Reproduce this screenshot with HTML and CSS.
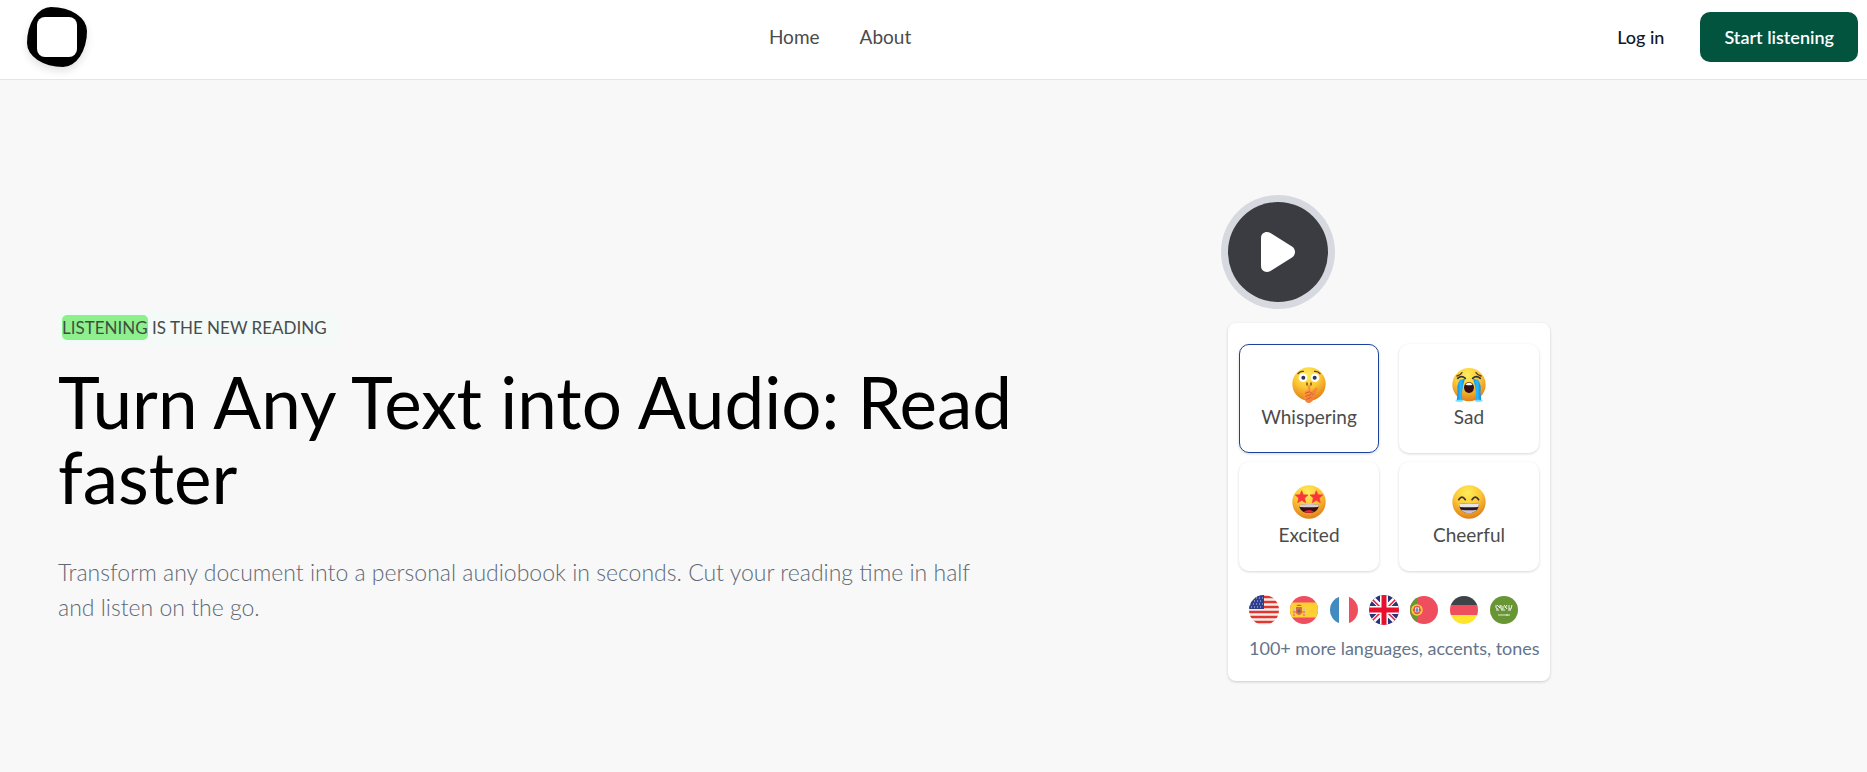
FILE: index.html
```html
<!DOCTYPE html>
<html lang="en">
<head>
    <meta charset="UTF-8">
    <meta name="viewport" content="width=device-width, initial-scale=1">
    <title>Turn Any Text into Audio</title>
    <link rel="stylesheet" href="styles.css">
</head>
<body>
    <header class="header">
        <a class="logo" href="#" aria-label="Home page"><span class="logo-hole"></span></a>
        <nav class="nav">
            <a href="#">Home</a>
            <a href="#about">About</a>
        </nav>
        <div class="actions">
            <a class="login" href="#login">Log in</a>
            <button class="btn-start" type="button">Start listening</button>
        </div>
    </header>

    <main class="hero">
        <section class="intro">
            <p class="tag"><mark>LISTENING</mark> IS THE NEW READING</p>
            <h1>Turn Any Text into Audio: Read faster</h1>
            <p class="lead">Transform any document into a personal audiobook in seconds. Cut your reading time in half and listen on the go.</p>
        </section>

        <section class="demo">
            <button class="play" type="button" aria-label="Play">
                <svg viewBox="0 0 34 40" width="34" height="40">
                    <path d="M0 6C0 1 5 -1.500 9.500 1L31 14.500C35 17 35 23 31 25.500L9.500 39C5 41.500 0 39 0 34Z" fill="#fff"/>
                </svg>
            </button>

            <div class="panel">
                <div class="tones">
                    <button class="tone active" type="button">
                        <svg viewBox="0 0 102 108" width="34" height="36">
                            <defs>
                                <radialGradient id="face" cx="45%" cy="22%" r="80%">
                                    <stop offset="0" stop-color="#ffee58"/>
                                    <stop offset=".5" stop-color="#fcc735"/>
                                    <stop offset="1" stop-color="#e07a16"/>
                                </radialGradient>
                                <linearGradient id="hand" x1="0" y1="0" x2="1" y2="1">
                                    <stop offset="0" stop-color="#ffa53e"/>
                                    <stop offset="1" stop-color="#f0703c"/>
                                </linearGradient>
                                <linearGradient id="tear" x1="0" y1="0" x2="1" y2="0">
                                    <stop offset="0" stop-color="#0a8fe0"/>
                                    <stop offset=".5" stop-color="#2cb8ff"/>
                                    <stop offset="1" stop-color="#0787dd"/>
                                </linearGradient>
                            </defs>
                            <circle cx="51" cy="51" r="50" fill="url(#face)"/>
                            <path d="M18 20Q24 12 34 13M68 13Q78 12 84 20" fill="none" stroke="#5d3a20" stroke-width="4" stroke-linecap="round"/>
                            <circle cx="33" cy="32" r="13" fill="#fff"/>
                            <circle cx="69" cy="32" r="13" fill="#fff"/>
                            <circle cx="34" cy="32" r="6" fill="#303650"/>
                            <circle cx="68" cy="32" r="6" fill="#303650"/>
                            <path d="M45 48V54M57 48V54" stroke="#66391a" stroke-width="4" stroke-linecap="round"/>
                            <path d="M47 56Q51 51 55 56L56 76L71 62Q77 60 76 67L66 91Q62 107 51 108Q40 108 38 97L34 88Q32 82 38 79Q36 72 47 70Z" fill="url(#hand)"/>
                            <path d="M40 79L53 74M41 88L56 83M44 97L57 91M56 76L63 83" fill="none" stroke="#d85c28" stroke-width="3" stroke-linecap="round"/>
                        </svg>
                        <span>Whispering</span>
                    </button>
                    <button class="tone" type="button">
                        <svg viewBox="0 0 102 108" width="34" height="36">
                            <circle cx="51" cy="53" r="50" fill="url(#face)"/>
                            <path d="M15 27Q25 25 30 17M72 17Q77 25 87 27" fill="none" stroke="#5d3a20" stroke-width="4" stroke-linecap="round"/>
                            <path d="M20 36Q31 40 39 34L33 57Q28 76 31 101L14 101Q18 76 16 58Q18 45 25 37Z" fill="url(#tear)"/>
                            <path d="M82 36Q71 40 63 34L69 57Q74 76 71 101L88 101Q84 76 86 58Q84 45 77 37Z" fill="url(#tear)"/>
                            <path d="M17 34Q29 24 40 34M62 34Q73 24 85 34" fill="none" stroke="#293147" stroke-width="5" stroke-linecap="round"/>
                            <ellipse cx="22" cy="101" rx="12" ry="3" fill="#78dcff"/>
                            <ellipse cx="80" cy="101" rx="12" ry="3" fill="#78dcff"/>
                            <path d="M36 61Q38 46 51 46T66 61Q65 78 51 78T36 61Z" fill="#350d15"/>
                            <path d="M40 53Q43 47 51 47T62 53Q51 57 40 53Z" fill="#fff"/>
                        </svg>
                        <span>Sad</span>
                    </button>
                    <button class="tone" type="button">
                        <svg viewBox="0 0 102 108" width="34" height="36">
                            <circle cx="51" cy="51" r="50" fill="url(#face)"/>
                            <path id="star" d="M29 17L34 29L48 30L38 39L41 53L29 46L17 53L20 39L10 30L24 29Z" fill="#f9363b" stroke="#f9363b" stroke-width="2" stroke-linejoin="round"/>
                            <use href="#star" x="44"/>
                            <path d="M21 60Q51 56 81 60Q78 84 51 84T21 60Z" fill="#350d15"/>
                            <path d="M21 59Q51 55 81 59L79 66Q51 68 23 66Z" fill="#d9cdd2"/>
                            <path d="M36 80Q51 70 66 80Q51 87 36 80Z" fill="#ec2534"/>
                        </svg>
                        <span>Excited</span>
                    </button>
                    <button class="tone" type="button">
                        <svg viewBox="0 0 102 108" width="34" height="36">
                            <circle cx="51" cy="51" r="50" fill="url(#face)"/>
                            <path d="M20 44Q30 29 40 44M60 44Q70 29 80 44" fill="none" stroke="#3d3032" stroke-width="5" stroke-linecap="round"/>
                            <path d="M21 57Q51 53 81 57Q80 84 51 84T21 57Z" fill="#24191f"/>
                            <path d="M21 57Q51 52 81 57L79 66Q51 68 23 66Z" fill="#e9e2e7"/>
                            <path d="M27 74Q51 78 75 74Q67 84 51 84T27 74Z" fill="#cbc1d2"/>
                        </svg>
                        <span>Cheerful</span>
                    </button>
                </div>

                <div class="languages">
                    <div class="flags">
                        <!-- USA -->
                        <svg viewBox="0 0 30 30" role="img" aria-label="American English">
                            <defs>
                                <clipPath id="big"><circle cx="15" cy="15" r="15"/></clipPath>
                                <clipPath id="small"><circle cx="15" cy="15" r="14"/></clipPath>
                            </defs>
                            <g clip-path="url(#big)">
                                <path d="M0 0H30V30H0Z" fill="#f4f0ee"/>
                                <path d="M0 2H30M0 7H30M0 12H30M0 17H30M0 22H30M0 27H30" stroke="#e2372c" stroke-width="2.500"/>
                                <path d="M0 0H15V14H0Z" fill="#2e3f8f"/>
                                <path d="M1 3H14M2 6H14M1 9H14M2 12H14" stroke="#c9cde6" stroke-width="1" stroke-dasharray="1 2"/>
                            </g>
                        </svg>
                        <!-- Spain -->
                        <svg viewBox="0 0 30 30" role="img" aria-label="Spanish">
                            <g clip-path="url(#small)">
                                <path d="M0 0H30V30H0Z" fill="#ef4e5e"/>
                                <path d="M0 7.500H30V22.500H0Z" fill="#ffd033"/>
                                <path d="M7 12H13V18Q10 22 7 18Z" fill="#d66b43"/>
                                <path d="M5 13V20M15 13V20" stroke="#d9c1a0" stroke-width="1.500"/>
                                <path d="M4 17H7M13 17H16M4 20H6M14 20H16" stroke="#ea5a55" stroke-width="1.200"/>
                                <path d="M7 11Q10 8 13 11Z" fill="#e84c55"/>
                                <circle cx="10" cy="16" r="1.500" fill="#6a6277"/>
                            </g>
                        </svg>
                        <!-- France -->
                        <svg viewBox="0 0 30 30" role="img" aria-label="French">
                            <g clip-path="url(#small)">
                                <path d="M0 0H30V30H0Z" fill="#fff"/>
                                <path d="M0 0H10V30H0Z" fill="#428bc1"/>
                                <path d="M20 0H30V30H20Z" fill="#ef4e5e"/>
                            </g>
                        </svg>
                        <!-- United Kingdom -->
                        <svg viewBox="0 0 30 30" role="img" aria-label="British English">
                            <g clip-path="url(#big)">
                                <path d="M0 0H30V30H0Z" fill="#29337a"/>
                                <path d="M0 0L30 30M30 0L0 30" stroke="#fff" stroke-width="5"/>
                                <path d="M0 1L14 15M30 1L16 15M0 29L14 15M30 29L16 15" stroke="#e4183a" stroke-width="1.500"/>
                                <path d="M15 0V30M0 15H30" stroke="#fff" stroke-width="8"/>
                                <path d="M15 0V30M0 15H30" stroke="#e8112d" stroke-width="5"/>
                            </g>
                        </svg>
                        <!-- Portugal -->
                        <svg viewBox="0 0 30 30" role="img" aria-label="Portuguese">
                            <g clip-path="url(#small)">
                                <path d="M0 0H30V30H0Z" fill="#ef4e5e"/>
                                <path d="M0 0H8V30H0Z" fill="#699635"/>
                                <circle cx="8" cy="15" r="5" fill="#d86041" stroke="#f9d038" stroke-width="1.500"/>
                                <path d="M3 12L13 18M3 18L13 12" stroke="#f9d038" stroke-width="1"/>
                                <path d="M5.500 12H10.500V16Q8 20 5.500 16Z" fill="#f4eef0" stroke="#ea4d5a" stroke-width="1"/>
                                <path d="M8 13V17M6.500 15H9.500" stroke="#3972b5" stroke-width="1.200"/>
                            </g>
                        </svg>
                        <!-- Germany -->
                        <svg viewBox="0 0 30 30" role="img" aria-label="German">
                            <g clip-path="url(#small)">
                                <path d="M0 0H30V10H0Z" fill="#3e4347"/>
                                <path d="M0 10H30V20H0Z" fill="#ef4e5e"/>
                                <path d="M0 20H30V30H0Z" fill="#ffe62e"/>
                            </g>
                        </svg>
                        <!-- Saudi Arabia -->
                        <svg viewBox="0 0 30 30" role="img" aria-label="Arabic">
                            <circle cx="15" cy="15" r="14" fill="#699635"/>
                            <path d="M7 10V13L9 14M8 10L11 13V10M12 10V14H14V11M15 10L18 14M18 10L16 13M20 10V14H22L23 10M7 15H10M12 15H16M19 15H22" fill="none" stroke="#f0f5e9" stroke-width="1"/>
                            <path d="M9 20H21M18 19V21" stroke="#dbe7ca" stroke-width="1.200"/>
                        </svg>
                    </div>
                    <p>100+ more languages, accents, tones</p>
                </div>
            </div>
        </section>
    </main>
</body>
</html>
```
FILE: styles.css
```css
* {
    box-sizing: border-box;
}

body {
    margin: 0;
    min-height: 100vh;
    display: flex;
    flex-direction: column;
    background: #f8f8f8;
    color: #4b4b4b;
    font-family: Lato, sans-serif;
    font-size: 18px;
    line-height: 24px;
}

h1, p {
    margin: 0;
}

a {
    color: inherit;
    text-decoration: none;
}

button {
    border: 0;
    color: inherit;
    font: inherit;
    cursor: pointer;
}

/* header */
.header {
    display: flex;
    align-items: center;
    justify-content: space-between;
    height: 80px;
    padding: 0 9px 6px 27px;
    background: #fff;
    border-bottom: 1px solid #e5e5e5;
}

.logo {
    display: flex;
    align-items: center;
    justify-content: center;
    width: 60px;
    height: 60px;
    background: #000;
    border-radius: 40% 60% 40% 60% / 60% 40% 60% 40%;
    box-shadow: 0 4px 8px rgba(0, 0, 0, .12);
}

.logo-hole {
    width: 40px;
    height: 40px;
    background: #fff;
    border-radius: 8px;
}

.nav {
    display: flex;
    gap: 40px;
    padding-right: 24px;
    font-size: 19px;
}

.actions {
    display: flex;
    align-items: center;
    gap: 36px;
}

.login {
    color: #111827;
    font-weight: 500;
}

.btn-start {
    height: 50px;
    padding: 0 24px;
    background: #03543f;
    border-radius: 10px;
    color: #fff;
    font-weight: 600;
}

/* hero */
.hero {
    flex: 1;
    display: grid;
    grid-template-columns: 2fr 1fr;
    gap: 8px;
    align-items: center;
    padding: 30px 58px 0;
}

.intro {
    max-width: 960px;
    padding-top: 54px;
}

.tag {
    display: inline-block;
    padding: 4px 10px 5px 4px;
    background: #f3faf7;
    font-size: 17px;
    line-height: 25px;
}

.tag mark {
    display: inline-block;
    background: #8df08d;
    border-radius: 5px;
    color: #3d5040;
}

h1 {
    margin: 19px 0 41px;
    color: #000;
    font-size: 71px;
    font-weight: 400;
    line-height: 75px;
}

.lead {
    max-width: 940px;
    color: #606875;
    font-size: 23px;
    font-weight: 300;
    line-height: 35px;
}

.demo {
    display: flex;
    flex-direction: column;
    align-items: flex-start;
    gap: 21px;
}

.play {
    display: flex;
    align-items: center;
    justify-content: center;
    width: 100px;
    height: 100px;
    padding: 0;
    background: #3a3c41;
    border-radius: 50%;
    box-shadow: 0 0 0 7px #d6d9df;
}

.panel {
    width: 322px;
    padding: 21px 11px;
    background: #fff;
    border-radius: 8px;
    box-shadow: 0 1px 3px rgba(0, 0, 0, .18);
}

.tones {
    display: grid;
    grid-template-columns: 1fr 1fr;
    gap: 9px 20px;
}

.tone {
    display: flex;
    flex-direction: column;
    align-items: center;
    justify-content: center;
    gap: 2px;
    height: 109px;
    padding: 0;
    background: #fff;
    border: 1px solid transparent;
    border-radius: 10px;
    box-shadow: 0 1px 3px rgba(0, 0, 0, .16);
    font-size: 19px;
}

.tone.active {
    border-color: #1e429f;
}

.languages {
    padding: 24px 10px 0;
}

.flags {
    display: flex;
    gap: 10px;
    margin-bottom: 11px;
}

.flags svg {
    width: 30px;
    height: 30px;
}

.languages p {
    color: #64748b;
    white-space: nowrap;
}
```
